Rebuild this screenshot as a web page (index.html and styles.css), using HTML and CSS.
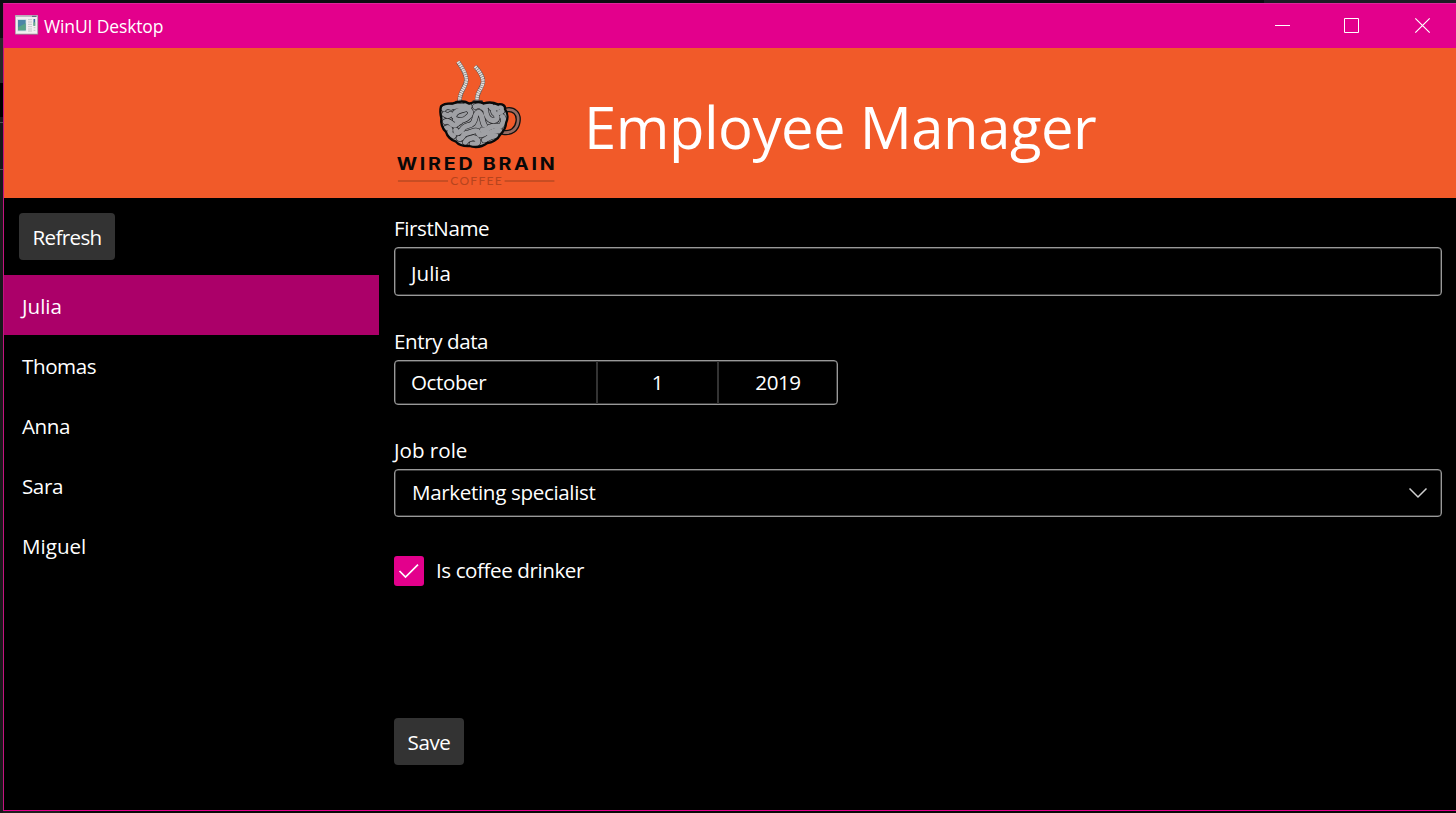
FILE: index.html
```html
<!DOCTYPE html>
<html lang="en">
<head>
<meta charset="utf-8">
<title>WinUI Desktop</title>
<link rel="stylesheet" href="styles.css">
</head>
<body>
<div class="backdrop-top"></div>
<div class="desktop">
<div class="backdrop-left"><i class="b1"></i><i class="b2"></i><i class="b3"></i><i class="b4"></i></div>
<div class="window">
  <div class="titlebar">
    <svg class="app-icon" width="24" height="20" viewBox="0 0 72 60">
      <rect x="3" y="3" width="67" height="56" fill="#9d4c80"/>
      <rect x="1" y="1" width="67" height="56" fill="#f2eff0" stroke="#a9a4a8" stroke-width="2"/>
      <path d="M2 4H67" stroke="#b9bcc0" stroke-width="4"/><path d="M51 4H64" stroke="#4d5d78" stroke-width="3"/>
      <rect x="7" y="12" width="27" height="37" fill="#d0dde2"/>
      <rect x="9" y="15" width="23" height="31" fill="#4b86a6"/>
      <path d="M9 46V37L32 25V46Z" fill="#58a286"/>
      <path d="M39 14H51M39 21H51M39 28H51M39 35H51M39 42H51M39 48H51" stroke="#c5c6c8" stroke-width="3"/>
      <path d="M58 12V32" stroke="#3e6fa0" stroke-width="5"/><path d="M58 22V33" stroke="#6eb18a" stroke-width="5"/>
      <path d="M56 38H61M56 46H61" stroke="#c5c6c8" stroke-width="3"/>
    </svg>
    <span class="app-title">WinUI Desktop</span>
    <svg class="controls" width="160" height="18" viewBox="0 0 160 18" fill="none" stroke="#fff">
      <path d="M0 8.500H15M69.500 1.500H83.500V15.500H69.500Z"/>
      <path d="M140.300 1.300L154.700 15.700M154.700 1.300L140.300 15.700" stroke-width="1.200"/>
    </svg>
  </div>
  <header class="banner">
    <svg class="logo" width="190" height="150" viewBox="0 -6 570 450" fill="none" stroke-linecap="round" stroke-linejoin="round">
      <defs>
        <path id="cup" d="M168 169C176 159 193 160 204 160C222 153 241 153 253 161C268 154 288 156 296 160C311 156 326 157 338 163C354 160 362 168 360 178C371 192 368 210 363 220C363 236 353 247 345 255C338 270 319 278 307 279C291 291 270 293 253 288C233 289 219 282 213 275C198 271 186 258 183 246C171 235 167 217 169 205C165 189 165 179 168 169Z"/>
        <g id="folds">
          <path d="M176 176Q184 167 198 172"/>
          <path d="M179 193Q188 200 196 193"/>
          <path d="M181 215C188 211 195 216 203 224C211 229 215 220 224 216"/>
          <path d="M207 198C209 180 230 182 246 175C260 168 250 164 239 168C228 174 219 163 208 170"/>
          <path d="M211 208C225 213 240 211 248 202C258 194 259 186 253 181"/>
          <path d="M184 234C193 230 199 240 193 249L205 258"/>
          <path d="M212 240C212 257 228 245 235 234C242 224 256 229 264 219C273 209 269 187 281 187C293 189 290 214 298 225"/>
          <path d="M271 170C283 161 294 171 302 180C303 199 312 211 325 212C343 209 336 194 327 188C322 177 326 169 336 174"/>
          <path d="M301 170C309 162 320 165 319 173"/>
          <path d="M348 172C357 174 352 186 344 187"/>
          <path d="M352 200C360 208 353 224 346 229C334 232 328 225 316 231C306 235 301 245 292 240"/>
          <path d="M344 243C330 241 319 245 311 250"/>
          <path d="M333 258C320 256 308 265 298 270"/>
          <path d="M222 265C234 270 231 253 244 250C259 249 275 235 280 248C280 260 297 253 304 247"/>
          <path d="M241 277C246 265 258 266 265 263C276 264 286 277 273 282H261"/>
        </g>
      </defs>
      <g stroke-linecap="butt">
        <path d="M219 35C231 52 244 72 244 90C242 115 222 125 224 155M270 49C284 64 295 82 294 96C290 122 275 122 276 154" stroke="#645a58" stroke-width="13"/>
        <path d="M219 35C231 52 244 72 244 90C242 115 222 125 224 155M270 49C284 64 295 82 294 96C290 122 275 122 276 154" stroke="#e2dfdc" stroke-width="10" stroke-dasharray="5 1.500"/>
      </g>
      <path d="M214 156H240M266 155H290" stroke="#393434" stroke-width="8"/>
      <path d="M363 180C386 175 403 190 399 215C396 238 379 251 354 247" stroke="#111" stroke-width="16"/>
      <path d="M363 180C386 175 403 190 399 215C396 238 379 251 354 247" stroke="#956b61" stroke-width="8"/>
      <use href="#cup" fill="#9b9ca0"/>
      <use href="#folds" stroke="#1c1c1e" stroke-width="19"/>
      <use href="#folds" stroke="#a0a1a5" stroke-width="15.500"/>
      <use href="#cup" stroke="#090909" stroke-width="7"/>
      <text class="logo-name" transform="translate(35 360) scale(1.18 1)" textLength="402" lengthAdjust="spacing">WIRED BRAIN</text>
      <path d="M40 393H188M360 393H507" stroke="#9e401f" stroke-width="3"/>
      <text class="logo-sub" transform="translate(196 405) scale(1.1 1)" textLength="140" lengthAdjust="spacing">COFFEE</text>
    </svg>
    <h1 class="heading">Employee Manager</h1>
  </header>
  <main class="content">
    <aside class="sidebar">
      <button class="btn refresh">Refresh</button>
      <ul class="people">
        <li class="selected loose">Julia</li><li>Thomas</li><li>Anna</li><li>Sara</li><li class="loose">Miguel</li>
      </ul>
    </aside>
    <section class="form">
      <div class="label">FirstName</div>
      <div class="box first-name loose">Julia</div>
      <div class="label entry-label">Entry data</div>
      <div class="box date"><span class="month">October</span><span class="day">1</span><span class="year">2019</span></div>
      <div class="label job-label loose">Job role</div>
      <div class="box role"><span class="role-text">Marketing specialist</span>
        <svg width="20" height="12" viewBox="0 0 20 12" fill="none" stroke="#d0d0d0" stroke-width="1.500"><path d="M1.500 1.500L10 10L18.500 1.500"/></svg>
      </div>
      <div class="check-row">
        <svg width="30" height="30" viewBox="0 0 30 30"><rect width="30" height="30" rx="3" fill="#e3008c"/><path d="M5.500 15L11.500 21L24 8.700" fill="none" stroke="#fff" stroke-width="1.700"/></svg>
        <span class="check-text">Is coffee drinker</span>
      </div>
      <button class="btn save">Save</button>
    </section>
  </main>
</div>
</div>
</body>
</html>
```
FILE: styles.css
```css
* { box-sizing: border-box; }
body {
  margin: 0; width: 1456px; height: 813px; overflow: hidden;
  background: linear-gradient(90deg, #1e1e1e 60px, #080808 60px);
  color: #fff; font: 20.6px/28px "Open Sans", "Noto Sans", sans-serif; letter-spacing: -0.42px;
}
.backdrop-top { height: 3px; background: linear-gradient(90deg, #0c0c10 1264px, #1d1c24 1264px); }
.desktop { display: flex; height: 810px; }
.backdrop-left { width: 3px; flex: none; display: flex; flex-direction: column; background: #19191b; }
.backdrop-left i { display: block; flex: none; }
.b1 { height: 35px; background: #0d0d12; }
.b2 { height: 45px; background: #28282a; }
.b3 { height: 34px; background: #000; }
.b4 { height: 48px; margin-top: 5px; border-top: 1px solid #555; border-bottom: 1px solid #555; }
.window {
  width: 1453px; height: 808px; border: solid #e3008c; border-width: 1px 0 1px 1px;
  border-top-color: #dc279b; border-left-color: #c41480;
  background: #000; display: flex; flex-direction: column;
}
.titlebar { height: 44px; flex: none; background: #e3008c; display: flex; align-items: center; padding-left: 11px; }
.app-icon { margin-bottom: 2px; margin-right: -1px; flex: none; }
.app-title { margin-left: 6px; font-size: 17.5px; font-weight: 400; letter-spacing: -0.13px; }
.controls { margin: 0 21px 0 auto; }
.banner { height: 150px; flex: none; background: #f15a29; display: flex; padding-left: 381px; }
.heading { margin: 0; padding-left: 9px; font-size: 58px; line-height: 157px; font-weight: 400; letter-spacing: -0.5px; white-space: nowrap; }
.logo { flex: none; }
.logo-name { fill: #080808; font: 700 50px Inter, sans-serif; letter-spacing: 0; }
.logo-sub { fill: #b6441e; font: 400 33px Lato, sans-serif; letter-spacing: 0; }
.content { display: flex; flex: 1; }
.sidebar { width: 375px; flex: none; padding-top: 15px; }
.btn { display: block; border: 0; border-radius: 4px; background: #333; color: #fff; font: inherit; letter-spacing: inherit; height: 47px; padding: 1px 0 0; }
.refresh { width: 96px; margin-left: 15px; letter-spacing: -0.65px; }
.people { list-style: none; padding: 0; margin: 15px 0 0; }
.people li { height: 60px; padding: 2px 18px 0; line-height: 58px; }
.people .selected { background: #ab0069; }
.form { padding: 16px 14px 0 15px; flex: 1; }
.label { height: 33px; line-height: 28px; }
.loose { letter-spacing: 0; }
.box { border: 1.5px solid #999; border-radius: 4px; display: flex; align-items: center; box-shadow: inset 0 0 0 .5px #777; }
.first-name { height: 49px; padding: 2px 16px 0; }
.entry-label { margin-top: 31px; }
.date { width: 444px; height: 45px; }
.date span { height: 43px; line-height: 43px; }
.month { width: 201px; padding-left: 16px; }
.day { width: 121px; border-left: 2px solid #333; text-align: center; }
.year { width: 120px; border-left: 2px solid #333; text-align: center; }
.job-label { margin-top: 31px; }
.role { height: 48px; padding: 0 13px 0 17px; justify-content: space-between; }
.role-text { padding-bottom: 2px; letter-spacing: -0.35px; }
.check-row { margin-top: 39px; display: flex; align-items: center; gap: 12px; }
.check-text { padding-bottom: 2px; }
.save { width: 70px; margin-top: 132px; }
```
